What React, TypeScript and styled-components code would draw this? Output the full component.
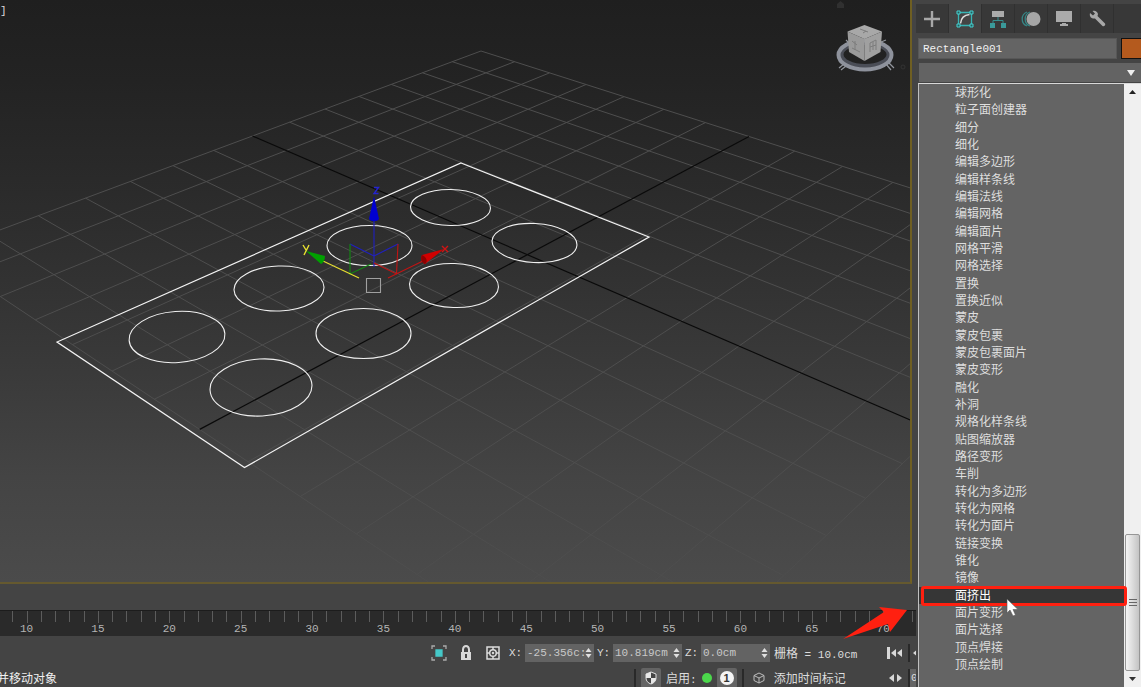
import React from 'react';
import styled, { createGlobalStyle } from 'styled-components';

const GlobalStyle = createGlobalStyle`
  * { box-sizing: border-box; }
  body {
    margin: 0;
    background: #444;
    color: #dcdcdc;
    font-family: "Liberation Mono", "Noto Sans CJK SC", monospace;
    font-size: 11px;
  }
  button, input, select { font: inherit; color: inherit; border: 0; padding: 0; margin: 0; background: none; border-radius: 0; }
  svg { display: block; }
`;

const Page = styled.div`
  display: flex;
  height: 100vh;
  min-height: 400px;
  overflow: hidden;
`;

const Workspace = styled.main`
  position: relative;
  flex: 1;
  min-width: 0;
  display: flex;
  flex-direction: column;
`;

const Viewport = styled.section`
  position: relative;
  flex: 1;
  min-height: 0;
  margin-right: 4px;
  border-right: 2px solid #6f5f22;
  border-bottom: 2px solid #65592f;
  background: linear-gradient(#1f1f1f 0%, #232323 14%, #2d2d2d 38%, #3a3a3a 64%, #444 82%, #4b4b4b 100%);
  overflow: hidden;
`;

const ViewportLabel = styled.span`
  position: absolute;
  left: 0;
  top: 4px;
  line-height: 14px;
`;

const Scene = styled.svg`
  width: 100%;
  height: 100%;
`;

const Ruler = styled.div`
  flex: none;
  height: 26px;
  margin-top: 26px;
  background: #2a2a2a;
  border-top: 1px solid #1c1c1c;
  overflow: hidden;
`;

const Frames = styled.div`
  display: grid;
  grid-template-columns: repeat(65, 1fr);
  width: calc(100% + 12px);
  height: 100%;
  margin-left: -2px;
`;

const Frame = styled.div<{ $major: boolean }>`
  min-width: 0;
  display: flex;
  flex-direction: column;
  align-items: flex-start;
  &::before {
    content: "";
    width: 1px;
    height: ${p => (p.$major ? 12 : 11)}px;
    background: #5c5c5c;
  }
`;

const FrameLabel = styled.span`
  width: 14px;
  margin-left: -7px;
  line-height: 12px;
  text-align: center;
  color: #b4b4b4;
`;

const Status = styled.footer`
  flex: none;
  height: 51px;
  padding-top: 2px;
`;

const StatusRow = styled.div<{ $height: number }>`
  display: flex;
  align-items: center;
  height: ${p => p.$height}px;
  white-space: nowrap;
  overflow: hidden;
`;

const Prompt = styled.span`
  flex: 1;
  min-width: 0;
  margin-left: -3px;
  font-size: 12px;
  color: #f0f0f0;
`;

const IconButton = styled.button<{ $width: number; $filled?: boolean }>`
  flex: none;
  display: flex;
  align-items: center;
  justify-content: center;
  width: ${p => p.$width}px;
  height: 20px;
  border-radius: 2px;
  background: ${p => (p.$filled ? '#646464' : 'transparent')};
`;

const AxisLabel = styled.label`
  display: flex;
  align-items: center;
  padding-left: 3px;
`;

const AxisName = styled.span`
  width: 16px;
`;

const Spinner = styled.span`
  display: flex;
  align-items: center;
  width: 69px;
  height: 18px;
  padding-left: 2px;
  background: #636363;
  input {
    width: 58px;
    color: #c8c8c8;
    outline: none;
  }
`;

const GridInfo = styled.span`
  width: 112px;
  padding-left: 4px;
  font-size: 11px;
`;

const Cjk = styled.span`
  font-size: 12px;
`;

const TimeTools = styled.div`
  display: flex;
  align-items: center;
  gap: 5px;
  width: 248px;
`;

const Divider = styled.span`
  flex: none;
  width: 2px;
  height: 18px;
  background: #292929;
`;

const Dot = styled.span`
  flex: none;
  width: 10px;
  height: 10px;
  border-radius: 50%;
  background: #4bd84b;
`;

const Badge = styled.span`
  width: 14px;
  height: 14px;
  border-radius: 50%;
  background: #f4f4f4;
  color: #333;
  font: bold 11px/14px "Liberation Sans", sans-serif;
`;

const Transport = styled.div`
  display: flex;
  align-items: center;
  width: 34px;
  overflow: hidden;
`;

const FrameInput = styled.input`
  && {
    flex: none;
    width: 40px;
    height: 18px;
    background: #646464;
    padding-left: 1px;
  }
`;

const ArrowMark = styled.svg`
  position: absolute;
  right: 8px;
  bottom: 47px;
`;

const CommandPanel = styled.aside`
  flex: none;
  width: 225px;
  display: flex;
  flex-direction: column;
  padding-top: 4px;
`;

const Tabs = styled.nav`
  flex: none;
  display: flex;
  height: 29px;
  background: #383838;
`;

const Tab = styled.button<{ $active?: boolean }>`
  && {
    display: flex;
    align-items: center;
    justify-content: center;
    width: 33px;
    border-right: 1px solid #303030;
    background: ${p => (p.$active ? '#444' : 'transparent')};
  }
`;

const NameRow = styled.div`
  flex: none;
  display: flex;
  gap: 4px;
  height: 21px;
  margin: 5px 0 4px 2px;
`;

const NameInput = styled.input`
  && {
    flex: 1;
    min-width: 0;
    padding-left: 4px;
    background: #646464;
    border: 1px solid #575757;
    color: #f2f2f2;
  }
`;

const Swatch = styled.button`
  && {
    width: 20px;
    background: #b45a1e;
    border: 1px solid #111;
    border-right: 0;
  }
`;

const Picker = styled.div`
  position: relative;
  flex: none;
  height: 20px;
  margin-left: 3px;
  select {
    display: block;
    width: 100%;
    height: 19px;
    appearance: none;
    background: #636363;
  }
  svg {
    position: absolute;
    right: 6px;
    top: 7px;
    pointer-events: none;
  }
`;

const Dropdown = styled.div`
  flex: 1;
  min-height: 0;
  display: flex;
  margin-left: 2px;
  border-top: 1px solid #d8d8d8;
  border-left: 1px solid #c0c0c0;
  background: #646464;
`;

const Options = styled.ul`
  flex: 1;
  display: flex;
  flex-direction: column;
  margin: 0;
  padding: 0 0 14px;
  list-style: none;
`;

const Option = styled.li<{ $selected: boolean }>`
  position: relative;
  flex: 1;
  min-height: 0;
  display: flex;
  background: ${p => (p.$selected ? '#363636' : 'transparent')};
  color: ${p => (p.$selected ? '#fff' : '#dedede')};
  button {
    flex: 1;
    padding: 3px 0 0 36px;
    text-align: left;
    font-size: 12px;
    line-height: 14px;
  }
`;

const Highlight = styled.span`
  position: absolute;
  z-index: 1;
  inset: -1px -3px -2px 2px;
  border: 3px solid #ff2010;
  border-radius: 3px;
  pointer-events: none;
`;

const Cursor = styled.svg`
  position: absolute;
  z-index: 2;
  left: 87px;
  top: 11px;
  pointer-events: none;
`;

const ScrollBar = styled.div`
  flex: none;
  width: 17px;
  display: flex;
  flex-direction: column;
  background: #f0f0f0;
`;

const ScrollButton = styled.button`
  flex: none;
  height: 16px;
  display: flex;
  align-items: center;
  justify-content: center;
`;

const Track = styled.div`
  flex: 1;
  display: flex;
  flex-direction: column;
  justify-content: flex-end;
`;

const Thumb = styled.div`
  height: 137px;
  margin: 0 1px;
  display: flex;
  align-items: center;
  justify-content: center;
  border: 1px solid #969696;
  border-radius: 2px;
  background: linear-gradient(90deg, #f4f4f4, #dcdcdc 50%, #c4c4c4);
`;

const MODIFIERS = [
  '球形化', '粒子面创建器', '细分', '细化', '编辑多边形', '编辑样条线', '编辑法线', '编辑网格', '编辑面片',
  '网格平滑', '网格选择', '置换', '置换近似', '蒙皮', '蒙皮包裹', '蒙皮包裹面片', '蒙皮变形', '融化', '补洞',
  '规格化样条线', '贴图缩放器', '路径变形', '车削', '转化为多边形', '转化为网格', '转化为面片', '链接变换',
  '锥化', '镜像', '面挤出', '面片变形', '面片选择', '顶点焊接', '顶点绘制',
];
const SELECTED = '面挤出';

// Perspective projection of the ground plane; the home grid has 14 x 14 cells.
const project = (i: number, j: number) => {
  const u = i / 7;
  const v = j / 7;
  const w = 1 - 0.1414 * u - 0.13885 * v;
  return [(481 + 162.1 * u - 263.56 * v) / w, (51 + 66.2 * u + 66.12 * v) / w];
};
const segment = (a: number[], b: number[]) =>
  `M${a[0].toFixed(1)} ${a[1].toFixed(1)}L${b[0].toFixed(1)} ${b[1].toFixed(1)}`;
const steps = Array.from({ length: 15 }, (_, n) => n);
const gridPath = steps
  .filter(n => n !== 7)
  .map(n => segment(project(n, 0), project(n, 14)) + segment(project(0, n), project(14, n)))
  .join('');
const axisPath = segment(project(7, 0), project(7, 14)) + segment(project(0, 7), project(14, 7));

// Centre, radii and tilt in degrees of each circle spline as it is seen in perspective.
const CIRCLES = [
  [450.5, 207.5, 40, 18, 1], [534.5, 243, 42.5, 19.5, 3], [369.5, 245.5, 42.5, 20, 0], [279, 288.5, 45, 22.5, -2],
  [454, 285.5, 44.5, 22, 2], [177, 337, 48, 25.5, -4], [363.5, 333.5, 47.5, 25, 0], [261, 387.5, 51, 28.5, -3],
];

function ViewportScene() {
  return (
    <Scene viewBox="0 0 910 582" preserveAspectRatio="xMinYMin slice" fill="none">
      <path d={gridPath} stroke="#4e4e4e" strokeWidth="1" />
      <path d={axisPath} stroke="#0a0a0a" strokeWidth="1.2" />
      <path d="M461 163L649 237L244.500 467.500L57 342Z" stroke="#f4f4f4" strokeWidth="1.2" />
      {CIRCLES.map(([cx, cy, rx, ry, tilt]) => (
        <ellipse
          key={`${cx}`}
          cx={cx}
          cy={cy}
          rx={rx}
          ry={ry}
          transform={`rotate(${tilt} ${cx} ${cy})`}
          stroke="#f0f0f0"
          strokeWidth="1.1"
        />
      ))}
      <g strokeWidth="1.1">
        <path d="M350 244L374 256L398 244M374 267V220" stroke="#2020c0" />
        <path d="M350 244V274L371 264" stroke="#0f8a0f" />
        <path d="M398 244L396.500 274L374 263M388 278L425 260" stroke="#c01414" />
        <path d="M359 278L323 261" stroke="#e8e030" />
        <path d="M374 196L379 219C377 222 371 222 369 219Z" fill="#0000d0" />
        <path d="M306 251L325 256C325 260 323 263 321 264Z" fill="#00a000" />
        <path d="M444 249L422 255C420 259 422 263 425 264Z" fill="#d00000" />
        <path d="M422 255C420 259 422 263 425 264C428 262 427 257 422 255Z" fill="#8d0000" />
        <path d="M374 187.500H378.500L374 193.500H378.500" stroke="#2424d0" strokeWidth="1.4" />
        <path d="M303 245L306 250M309 245L304 255" stroke="#e8e030" strokeWidth="1.4" />
        <path d="M442 246L448 252M448 246L442 252" stroke="#d01414" strokeWidth="1.4" />
        <path d="M366.500 278.500H380.500V292.500H366.500Z" stroke="#a0a0a0" />
      </g>
      <ellipse cx="865" cy="54.500" rx="23.500" ry="11.500" stroke="#4a4d56" strokeWidth="4" />
      <ellipse cx="865" cy="55" rx="26.500" ry="14.500" stroke="#8e929c" strokeWidth="4" />
      <path d="M839 68L844 64M841 70L846 66M886 64L891 70M889 63L894 68M846 40L849 43M881 42L886 40" stroke="#92969e" strokeWidth="1.2" />
      <path d="M864.500 25L882 31.500L864.500 39L847.500 31.500Z" fill="#a8a8a8" />
      <path d="M847.500 31.500L864.500 39V61L849 52Z" fill="#9a9a9a" />
      <path d="M882 31.500L864.500 39V61L880.500 52Z" fill="#a0a0a0" />
      <path d="M860 29L868 32M863 33L866 31M852 41L857 45M855 41V50M852 48L860 52M870 43L876 40V50M870 43V52M873 42V50M870 47L876 45" stroke="#7c7c7c" />
      <path d="M837 4L840.500 1L844 4V8H837Z" fill="#303030" />
      <circle cx="903" cy="67" r="2" stroke="#333" />
    </Scene>
  );
}

function Timeline() {
  return (
    <Ruler>
      <Frames>
        {Array.from({ length: 65 }, (_, n) => n + 8).map(frame => (
          <Frame key={frame} $major={frame % 5 === 0}>
            {frame % 5 === 0 && <FrameLabel>{frame}</FrameLabel>}
          </Frame>
        ))}
      </Frames>
    </Ruler>
  );
}

function AxisField({ name, value }: { name: string; value: string }) {
  return (
    <AxisLabel>
      <AxisName>{name}:</AxisName>
      <Spinner>
        <input type="text" defaultValue={value} />
        <svg width="7" height="12" viewBox="0 0 7 12" fill="#e0e0e0">
          <path d="M3.500 1L6.500 5H.500ZM3.500 11L6.500 7H.500Z" />
        </svg>
      </Spinner>
    </AxisLabel>
  );
}

function StatusBar() {
  return (
    <Status>
      <StatusRow $height={30}>
        <Prompt />
        <IconButton $width={27} aria-label="孤立当前选择">
          <svg width="16" height="16" viewBox="0 0 16 16" fill="none" stroke="#aaa" strokeWidth="1.300">
            <path d="M1 4V1H4M12 1H15V4M15 12V15H12M4 15H1V12" />
            <path d="M5 5H11V11H5Z" fill="#45c8c8" stroke="#45c8c8" />
          </svg>
        </IconButton>
        <IconButton $width={27} aria-label="锁定选择">
          <svg width="12" height="16" viewBox="0 0 12 16" fill="none">
            <path d="M3 8V4.500A3 3.500 0 0 1 9 4.500V8" stroke="#d8d8d8" strokeWidth="2" />
            <path d="M1 7H11V15H1Z" fill="#d8d8d8" />
            <path d="M5 9H7V13H5Z" fill="#444" />
          </svg>
        </IconButton>
        <IconButton $width={27} aria-label="绝对模式变换输入">
          <svg width="14" height="14" viewBox="0 0 14 14" fill="none" stroke="#dcdcdc" strokeWidth="1.500">
            <path d="M1 1H13V13H1ZM7 1V4M7 10V13M1 7H4M10 7H13" />
            <circle cx="7" cy="7" r="3.300" />
            <circle cx="7" cy="7" r=".5" />
          </svg>
        </IconButton>
        <AxisField name="X" value="-25.356c:" />
        <AxisField name="Y" value="10.819cm" />
        <AxisField name="Z" value="0.0cm" />
        <GridInfo><Cjk>栅格</Cjk> = 10.0cm</GridInfo>
        <Transport>
          <IconButton $width={26} aria-label="转至开头">
            <svg width="16" height="12" viewBox="0 0 16 12" fill="#d8d8d8">
              <path d="M0 0H3V12H0ZM9 2V10L4 6ZM15 2V10L10 6Z" />
            </svg>
          </IconButton>
          <Divider />
          <IconButton $width={16} aria-label="上一帧">
            <svg width="10" height="10" viewBox="0 0 10 10" fill="#d8d8d8"><path d="M5 1V9L0 5ZM7 1H9V9H7Z" /></svg>
          </IconButton>
        </Transport>
      </StatusRow>
      <StatusRow $height={19}>
        <Prompt>并移动对象</Prompt>
        <TimeTools>
          <Divider />
          <IconButton $width={20} $filled aria-label="安全">
            <svg width="12" height="14" viewBox="0 0 12 14">
              <path d="M6 1L11 3V7C11 10 9 12 6 13C3 12 1 10 1 7V3Z" fill="#454545" stroke="#e0e0e0" />
              <path d="M6 1L1 3V7H6ZM6 7H11C11 10 9 12 6 13Z" fill="#e8e8e8" />
            </svg>
          </IconButton>
          <span><Cjk>启用</Cjk>:</span>
          <Dot />
          <IconButton $width={20} $filled><Badge>1</Badge></IconButton>
          <Divider />
          <IconButton $width={20} aria-label="时间标记">
            <svg width="12" height="12" viewBox="0 0 12 12" fill="none" stroke="#bcbcbc">
              <path d="M6 1L11 3.500V8.500L6 11L1 8.500V3.500ZM1 3.500L6 6L11 3.500M6 6V11" />
            </svg>
          </IconButton>
          <Cjk>添加时间标记</Cjk>
        </TimeTools>
        <Transport>
          <IconButton $width={26} aria-label="关键点模式">
            <svg width="13" height="8" viewBox="0 0 13 8" fill="#d8d8d8"><path d="M5 0V8L0 4ZM8 0V8L13 4Z" /></svg>
          </IconButton>
          <Divider />
          <FrameInput type="text" defaultValue="0" aria-label="当前帧" />
        </Transport>
      </StatusRow>
    </Status>
  );
}

function PanelTabs() {
  return (
    <Tabs>
      <Tab aria-label="创建">
        <svg width="16" height="16" viewBox="0 0 16 16" fill="#a8a8a8"><path d="M6.800 0H9.200V6.800H16V9.200H9.200V16H6.800V9.200H0V6.800H6.800Z" /></svg>
      </Tab>
      <Tab $active aria-label="修改">
        <svg width="18" height="18" viewBox="0 0 18 18" fill="none">
          <path d="M4 2.500H14M4 15.500H14M2.500 4V14M15.500 4V14" stroke="#38b4b4" strokeWidth="1.300" />
          <path d="M1 1H4V4H1ZM14 1H17V4H14ZM1 14H4V17H1ZM14 14H17V17H14Z" fill="#285a5a" stroke="#45d0d0" />
          <path d="M4.500 13.500C5 8 8 5 13.500 4.500" stroke="#dcdcdc" strokeWidth="1.500" />
        </svg>
      </Tab>
      <Tab aria-label="层次">
        <svg width="18" height="18" viewBox="0 0 18 18" fill="none">
          <path d="M3 1H15V7H3Z" fill="#aaa" />
          <path d="M9 7V10M4 13V10.500H14V13" stroke="#378f8f" />
          <path d="M1 13H6V18H1ZM12 13H17V18H12Z" fill="#3a9a9a" />
        </svg>
      </Tab>
      <Tab aria-label="运动">
        <svg width="20" height="16" viewBox="0 0 20 16" fill="none">
          <path d="M6 1A7.500 7.500 0 0 0 6 15M9 1A7.500 7.500 0 0 0 9 15" stroke="#368585" strokeWidth="1.300" />
          <circle cx="12.500" cy="8" r="7" fill="#a6a6a6" />
        </svg>
      </Tab>
      <Tab aria-label="显示">
        <svg width="16" height="15" viewBox="0 0 16 15" fill="#ababab"><path d="M0 0H16V11H0ZM6 12H10V13H12V15H4V13H6Z" /></svg>
      </Tab>
      <Tab aria-label="实用程序">
        <svg width="17" height="17" viewBox="0 0 17 17" fill="#a8a8a8">
          <path d="M1 3L4 5.500L6 3.500L3.500 1C6 0 8.500 1.500 9 4L8.500 6L16 13.500C17 15 15 17 13.500 16L6 8.500C3 9 0 7 1 3Z" />
        </svg>
      </Tab>
    </Tabs>
  );
}

function ModifierDropdown() {
  return (
    <Dropdown>
      <Options>
        {MODIFIERS.map(name => (
          <Option key={name} $selected={name === SELECTED}>
            <button type="button">{name}</button>
            {name === SELECTED && (
              <>
                <Highlight />
                <Cursor width="14" height="20" viewBox="0 0 14 20">
                  <path d="M1 1V15L4 12L7 18L9.500 17L7 11.500H12Z" fill="#fff" stroke="#555" strokeWidth=".6" />
                </Cursor>
              </>
            )}
          </Option>
        ))}
      </Options>
      <ScrollBar>
        <ScrollButton aria-label="向上滚动">
          <svg width="7" height="4" viewBox="0 0 7 4"><path d="M0 4L3.500 0L7 4Z" fill="#222" /></svg>
        </ScrollButton>
        <Track>
          <Thumb>
            <svg width="8" height="9" viewBox="0 0 8 9"><path d="M0 1.500H8M0 4.500H8M0 7.500H8" stroke="#666" /></svg>
          </Thumb>
        </Track>
        <ScrollButton aria-label="向下滚动">
          <svg width="7" height="4" viewBox="0 0 7 4"><path d="M0 0L3.500 4L7 0Z" fill="#333" /></svg>
        </ScrollButton>
      </ScrollBar>
    </Dropdown>
  );
}

export default function App() {
  return (
    <Page>
      <GlobalStyle />
      <Workspace>
        <Viewport>
          <ViewportScene />
          <ViewportLabel>]</ViewportLabel>
        </Viewport>
        <Timeline />
        <StatusBar />
        <ArrowMark width="66" height="34" viewBox="0 0 66 34">
          <path d="M65 4L37 1L42 6L1 33L46 18L48 26Z" fill="#ff2010" />
        </ArrowMark>
      </Workspace>
      <CommandPanel>
        <PanelTabs />
        <NameRow>
          <NameInput type="text" defaultValue="Rectangle001" aria-label="对象名称" />
          <Swatch type="button" aria-label="对象颜色" />
        </NameRow>
        <Picker>
          <select aria-label="修改器列表" defaultValue="">
            <option value="" />
          </select>
          <svg width="8" height="6" viewBox="0 0 8 6"><path d="M0 0H8L4 6Z" fill="#eee" /></svg>
        </Picker>
        <ModifierDropdown />
      </CommandPanel>
    </Page>
  );
}
